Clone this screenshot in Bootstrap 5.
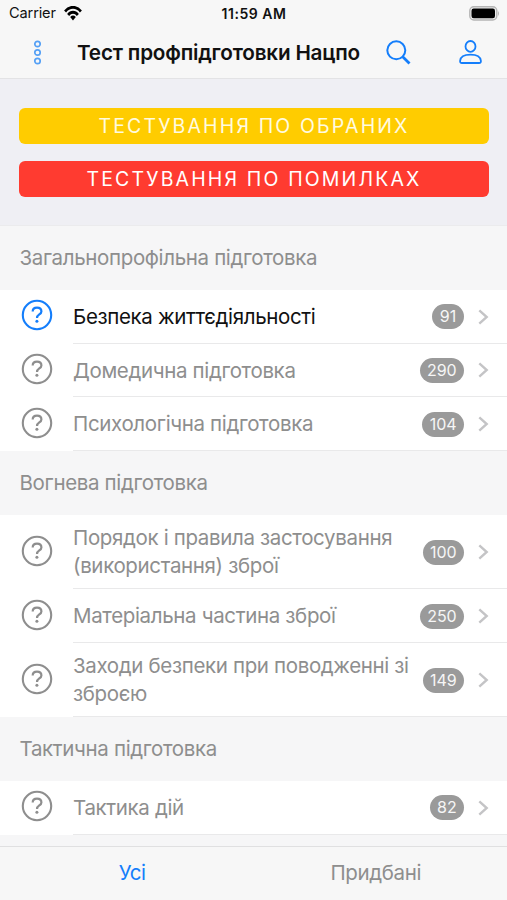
<!DOCTYPE html>
<html lang="uk">
<head>
<meta charset="utf-8">
<meta name="viewport" content="width=device-width, initial-scale=1">
<title>Тест профпідготовки</title>
<link href="https://cdn.jsdelivr.net/npm/bootstrap@5.3.0/dist/css/bootstrap.min.css" rel="stylesheet">
<style>
:root { --ios-blue: #147efb; --bar: #f7f7f7; --muted: #8e8e8e; }
body { font-family: Inter, "Liberation Sans", sans-serif; font-size: 20.5px; letter-spacing: -.35px; background: #f6f6f7; color: #111; }
.screen { height: 900px; overflow: hidden; }
.status-bar { height: 27px; padding: 0 7px 0 9px; background: var(--bar); font-size: 14.6px; line-height: 27px; letter-spacing: -.15px; }
.status-time { font-weight: 600; font-size: 14px; letter-spacing: .55px; margin-right: 1px; }
.title-bar { height: 52px; padding: 0 25px 0 33px; background: var(--bar); border-bottom: 1px solid #e3e3e5; color: var(--ios-blue); }
.page-title { margin-left: 35px; color: #111; font-size: 20.7px; font-weight: 600; letter-spacing: -.19px; line-height: 50px; white-space: nowrap; }
.profile { margin-left: 48px; }
.actions { height: 147px; padding: 29px 18px 0 19px; background: #efeff4; border-bottom: 1px solid #ebebed; gap: 17px; }
.action-btn { height: 36px; padding: 0; border: 0; border-radius: 6px; color: #fff; font-size: 19.5px; line-height: 37px; letter-spacing: 2.15px; }
.action-btn:hover { color: #fff; }
.chosen { background: #ffcc00; color: #fffbe0; }
.mistakes { background: #ff3b30; }
.section-title { height: 63.8px; padding: 0 19.5px; color: var(--muted); font-size: 20.5px; line-height: 64px; font-weight: 400; margin: 0; }
.topic { height: 53.8px; padding-left: 21px; background: #fff; color: var(--muted); }
.topic.tall { height: 74.2px; }
.topic-icon { width: 32px; height: 32px; flex: none; margin-top: -3px; }
.topic-body { margin-left: 20px; height: 100%; border-bottom: 1px solid #e9e9ea; padding-right: 18px; }
.topic-name { line-height: 27.8px; white-space: nowrap; padding-top: 1px; }
.count { height: 25px; min-width: 32px; text-align: center; border-radius: 13px; padding: 0 7.3px; background: #9a9a9a; color: #f6f6f6; font-size: 16px; line-height: 25px; letter-spacing: 0; margin-top: 1px; }
.chevron { margin-left: 14px; flex: none; margin-top: 1px; }
.active-topic { color: #111; }
.active-topic .topic-icon { color: var(--ios-blue); }
.tab-bar { height: 54px; background: var(--bar); border-top: 1px solid #e0e0e1; line-height: 52px; }
.tab-bar a { color: var(--muted); text-decoration: none; width: 50%; }
.tab-bar a.current { color: var(--ios-blue); }
.tab-bar a:first-child { padding-left: 11px; }
.tab-bar a:last-child { padding-right: 9px; }
</style>
<script src="https://cdn.jsdelivr.net/npm/bootstrap@5.3.0/dist/js/bootstrap.bundle.min.js"></script>
</head>
<body>
<svg class="d-none">
  <symbol id="question" viewBox="0 0 32 32"><circle cx="16" cy="16" r="14.2" fill="none" stroke="currentColor" stroke-width="2.1"/><path d="M11.700 12.400C11.700 9.700 13.500 8.700 16 8.700S20.400 10.100 20.400 12.400C20.400 15.500 16 15.400 16 18.900" fill="none" stroke="currentColor" stroke-width="2.200"/><circle cx="15.900" cy="22.300" r="1.500" fill="currentColor"/></symbol>
  <symbol id="chevron" viewBox="0 0 11 16"><path d="M1.3 1.3 8.7 8 1.3 14.7" fill="none" stroke="#c4c4c6" stroke-width="2.4"/></symbol>
</svg>
<div class="screen d-flex flex-column">
  <div class="status-bar d-flex align-items-center">
    <div class="col d-flex align-items-center"><span class="carrier">Carrier</span>
      <svg class="ms-2" style="margin-left:6px" width="18" height="15" viewBox="0 0 20 15" preserveAspectRatio="none"><g fill="none" stroke="#000" stroke-width="2.9"><path d="M1.2 5.5C6-.1 14-.1 18.8 5.5"/><path d="M4.600 9C7.600 5.400 12.400 5.400 15.400 9"/></g><path d="M6.900 10.900Q10 8.200 13.100 10.900L10 14.400Z"/></svg>
    </div>
    <span class="status-time">11:59 AM</span>
    <div class="col d-flex justify-content-end"><svg width="31" height="15" viewBox="0 0 31 15"><rect x=".8" y=".8" width="27" height="13.2" rx="4" fill="#eee" stroke="#b5b5b5" stroke-width="1.4"/><rect x="2.5" y="2.5" width="23.5" height="9.8" rx="2.2"/><path d="M29 5Q31 7.400 29 10Z" fill="#b5b5b5"/></svg></div>
  </div>
  <div class="title-bar d-flex align-items-center">
    <svg width="9" height="25" viewBox="0 0 9 25" fill="none" stroke="#55a0f5" stroke-width="1.7"><circle cx="4.5" cy="4" r="2.7"/><circle cx="4.5" cy="12.5" r="2.7"/><circle cx="4.5" cy="21" r="2.7"/></svg>
    <h1 class="page-title mb-0">Тест профпідготовки Нацпо</h1>
    <svg class="ms-auto flex-shrink-0" width="25" height="25" viewBox="0 0 25 25" fill="none" stroke="currentColor"><circle cx="10.3" cy="10.3" r="9" stroke-width="2"/><path d="m16.700 16.700 6.800 6.700" stroke-width="2.8"/></svg>
    <svg class="profile flex-shrink-0" width="23" height="25" viewBox="0 0 23 25" fill="none" stroke="currentColor" stroke-width="1.8"><ellipse cx="11.5" cy="6.4" rx="5" ry="5.4"/><path d="M3 23C1.400 23 1 22.200 1.100 20.900C1.500 16.900 5.800 14.700 11.500 14.700S21.500 16.900 21.900 20.900C22 22.200 21.600 23 20 23Z"/></svg>
  </div>
  <div class="actions d-flex flex-column">
    <button class="btn action-btn chosen w-100"><span>ТЕСТУВАННЯ ПО ОБРАНИХ</span></button>
    <button class="btn action-btn mistakes w-100"><span>ТЕСТУВАННЯ ПО ПОМИЛКАХ</span></button>
  </div>
  <main class="flex-grow-1 overflow-hidden">
    <h2 class="section-title">Загальнопрофільна підготовка</h2>
    <div class="topic active-topic d-flex align-items-center"><svg class="topic-icon"><use href="#question"/></svg><div class="topic-body d-flex align-items-center flex-grow-1"><span class="topic-name">Безпека життєдіяльності</span><span class="count ms-auto">91</span><svg class="chevron" width="11" height="16"><use href="#chevron"/></svg></div></div>
    <div class="topic d-flex align-items-center"><svg class="topic-icon"><use href="#question"/></svg><div class="topic-body d-flex align-items-center flex-grow-1"><span class="topic-name">Домедична підготовка</span><span class="count ms-auto">290</span><svg class="chevron" width="11" height="16"><use href="#chevron"/></svg></div></div>
    <div class="topic d-flex align-items-center"><svg class="topic-icon"><use href="#question"/></svg><div class="topic-body d-flex align-items-center flex-grow-1"><span class="topic-name">Психологічна підготовка</span><span class="count ms-auto">104</span><svg class="chevron" width="11" height="16"><use href="#chevron"/></svg></div></div>
    <h2 class="section-title">Вогнева підготовка</h2>
    <div class="topic tall d-flex align-items-center"><svg class="topic-icon"><use href="#question"/></svg><div class="topic-body d-flex align-items-center flex-grow-1"><span class="topic-name">Порядок і правила застосування<br>(використання) зброї</span><span class="count ms-auto">100</span><svg class="chevron" width="11" height="16"><use href="#chevron"/></svg></div></div>
    <div class="topic d-flex align-items-center"><svg class="topic-icon"><use href="#question"/></svg><div class="topic-body d-flex align-items-center flex-grow-1"><span class="topic-name">Матеріальна частина зброї</span><span class="count ms-auto">250</span><svg class="chevron" width="11" height="16"><use href="#chevron"/></svg></div></div>
    <div class="topic tall d-flex align-items-center"><svg class="topic-icon"><use href="#question"/></svg><div class="topic-body d-flex align-items-center flex-grow-1"><span class="topic-name">Заходи безпеки при поводженні зі<br>зброєю</span><span class="count ms-auto">149</span><svg class="chevron" width="11" height="16"><use href="#chevron"/></svg></div></div>
    <h2 class="section-title">Тактична підготовка</h2>
    <div class="topic d-flex align-items-center"><svg class="topic-icon"><use href="#question"/></svg><div class="topic-body d-flex align-items-center flex-grow-1"><span class="topic-name">Тактика дій</span><span class="count ms-auto">82</span><svg class="chevron" width="11" height="16"><use href="#chevron"/></svg></div></div>
  </main>
  <nav class="tab-bar d-flex text-center flex-shrink-0"><a class="current" href="#">Усі</a><a href="#">Придбані</a></nav>
</div>
</body>
</html>
